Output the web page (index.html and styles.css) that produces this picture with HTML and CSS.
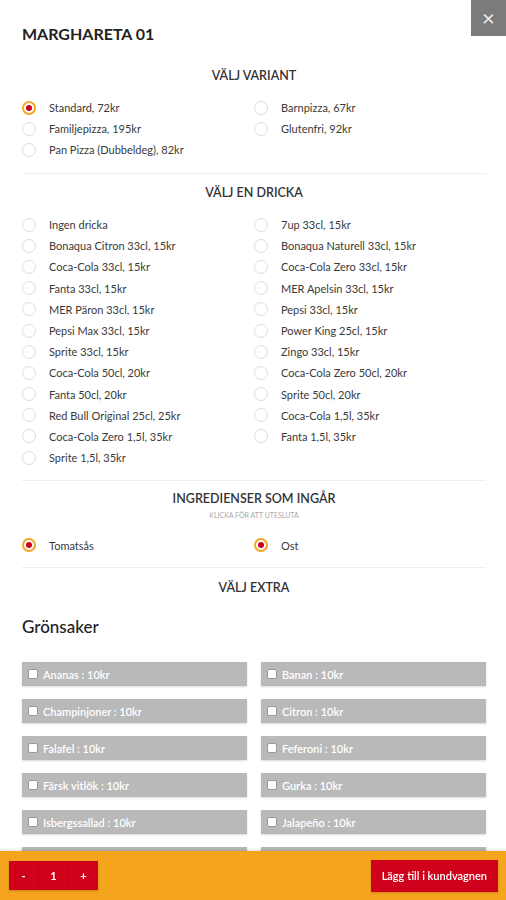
FILE: index.html
```html
<!DOCTYPE html>
<html lang="sv">
<head>
    <meta charset="UTF-8">
    <meta name="viewport" content="width=device-width, initial-scale=1.0">
    <title>Marghareta 01</title>
    <link rel="stylesheet" href="styles.css">
</head>
<body>
    <div class="modal">
        <button class="close-btn">&times;</button>
        <h1 class="product-title">MARGHARETA 01</h1>

        <div class="section variants">
            <h2 class="section-title">VÄLJ VARIANT</h2>
            <div class="options">
                <label class="option"><span class="radio checked"></span>Standard, 72kr</label>
                <label class="option"><span class="radio"></span>Barnpizza, 67kr</label>
                <label class="option"><span class="radio"></span>Familjepizza, 195kr</label>
                <label class="option"><span class="radio"></span>Glutenfri, 92kr</label>
                <label class="option"><span class="radio"></span>Pan Pizza (Dubbeldeg), 82kr</label>
            </div>
        </div>

        <div class="section drinks">
            <h2 class="section-title">VÄLJ EN DRICKA</h2>
            <div class="options">
                <label class="option"><span class="radio"></span>Ingen dricka</label>
                <label class="option"><span class="radio"></span>7up 33cl, 15kr</label>
                <label class="option"><span class="radio"></span>Bonaqua Citron 33cl, 15kr</label>
                <label class="option"><span class="radio"></span>Bonaqua Naturell 33cl, 15kr</label>
                <label class="option"><span class="radio"></span>Coca-Cola 33cl, 15kr</label>
                <label class="option"><span class="radio"></span>Coca-Cola Zero 33cl, 15kr</label>
                <label class="option"><span class="radio"></span>Fanta 33cl, 15kr</label>
                <label class="option"><span class="radio"></span>MER Apelsin 33cl, 15kr</label>
                <label class="option"><span class="radio"></span>MER Päron 33cl, 15kr</label>
                <label class="option"><span class="radio"></span>Pepsi 33cl, 15kr</label>
                <label class="option"><span class="radio"></span>Pepsi Max 33cl, 15kr</label>
                <label class="option"><span class="radio"></span>Power King 25cl, 15kr</label>
                <label class="option"><span class="radio"></span>Sprite 33cl, 15kr</label>
                <label class="option"><span class="radio"></span>Zingo 33cl, 15kr</label>
                <label class="option"><span class="radio"></span>Coca-Cola 50cl, 20kr</label>
                <label class="option"><span class="radio"></span>Coca-Cola Zero 50cl, 20kr</label>
                <label class="option"><span class="radio"></span>Fanta 50cl, 20kr</label>
                <label class="option"><span class="radio"></span>Sprite 50cl, 20kr</label>
                <label class="option"><span class="radio"></span>Red Bull Original 25cl, 25kr</label>
                <label class="option"><span class="radio"></span>Coca-Cola 1,5l, 35kr</label>
                <label class="option"><span class="radio"></span>Coca-Cola Zero 1,5l, 35kr</label>
                <label class="option"><span class="radio"></span>Fanta 1,5l, 35kr</label>
                <label class="option"><span class="radio"></span>Sprite 1,5l, 35kr</label>
            </div>
        </div>

        <div class="section ingredients">
            <h2 class="section-title">INGREDIENSER SOM INGÅR</h2>
            <p class="section-sub">KLICKA FÖR ATT UTESLUTA</p>
            <div class="options">
                <label class="option"><span class="radio checked"></span>Tomatsås</label>
                <label class="option"><span class="radio checked"></span>Ost</label>
            </div>
        </div>

        <div class="section extra-section">
            <h2 class="section-title">VÄLJ EXTRA</h2>
            <h3 class="group-title">Grönsaker</h3>
            <div class="extras">
                <label class="extra"><span class="checkbox"></span>Ananas : 10kr</label>
                <label class="extra"><span class="checkbox"></span>Banan : 10kr</label>
                <label class="extra"><span class="checkbox"></span>Champinjoner : 10kr</label>
                <label class="extra"><span class="checkbox"></span>Citron : 10kr</label>
                <label class="extra"><span class="checkbox"></span>Falafel : 10kr</label>
                <label class="extra"><span class="checkbox"></span>Feferoni : 10kr</label>
                <label class="extra"><span class="checkbox"></span>Färsk vitlök : 10kr</label>
                <label class="extra"><span class="checkbox"></span>Gurka : 10kr</label>
                <label class="extra"><span class="checkbox"></span>Isbergssallad : 10kr</label>
                <label class="extra"><span class="checkbox"></span>Jalapeño : 10kr</label>
                <label class="extra"><span class="checkbox"></span>Lök : 10kr</label>
                <label class="extra"><span class="checkbox"></span>Oliver : 10kr</label>
            </div>
        </div>
    </div>

    <div class="cart-bar">
        <div class="stepper">
            <button class="step">-</button>
            <span class="qty">1</span>
            <button class="step">+</button>
        </div>
        <button class="add-btn">Lägg till i kundvagnen</button>
    </div>
</body>
</html>
```

FILE: styles.css
```css
body {
    margin: 0;
    font-family: Lato, 'Open Sans', sans-serif;
    color: #333;
    background: white;
}
.modal {
    padding: 24px 20px 80px 22px;
}
.close-btn {
    position: absolute;
    top: 0;
    right: 0;
    width: 35px;
    height: 36px;
    border: none;
    background: #7b7b7b;
    color: #eee;
    font-size: 22px;
    line-height: 36px;
    padding: 0;
    font-family: Lato, sans-serif;
}
.product-title {
    margin: 0;
    font-size: 16px;
    line-height: 20px;
    font-weight: 700;
    color: #222;
}
.section {
    border-bottom: 1px solid #eee;
    padding-top: 9px;
    padding-bottom: 13px;
}
.variants {
    padding-top: 23px;
}
.drinks {
    padding-top: 10px;
    padding-bottom: 12px;
}
.ingredients {
    padding-bottom: 11px;
}
.extra-section {
    padding-top: 11px;
    border-bottom: none;
}
.section-title {
    margin: 0 0 12px;
    text-align: center;
    font-size: 12.5px;
    line-height: 18px;
    font-weight: 600;
    color: #333;
}
.section-sub {
    margin: -10px 0 14px;
    text-align: center;
    font-size: 7px;
    line-height: 10px;
    color: #aaa;
}
.options {
    display: grid;
    grid-template-columns: 1fr 1fr;
}
.option {
    display: flex;
    align-items: center;
    height: 21px;
    font-size: 11px;
    color: #3a3a3a;
}
.drinks .option {
    height: 21.2px;
}
.ingredients .option {
    height: 22px;
}
.radio {
    width: 12px;
    height: 12px;
    border: 1px solid #ddd;
    border-radius: 50%;
    margin-right: 13px;
    box-sizing: content-box;
    display: flex;
    align-items: center;
    justify-content: center;
    flex-shrink: 0;
}
.radio.checked {
    width: 10px;
    height: 10px;
    border: 2px solid #f5a623;
}
.radio.checked::after {
    content: '';
    width: 6px;
    height: 6px;
    border-radius: 50%;
    background: #d0021b;
}
.group-title {
    margin: 19px 0 24px;
    font-size: 17px;
    line-height: 22px;
    font-weight: 500;
    color: #222;
}
.extras {
    display: grid;
    grid-template-columns: 1fr 1fr;
    column-gap: 14px;
    row-gap: 13px;
}
.extra {
    display: flex;
    align-items: center;
    height: 24px;
    padding-left: 6px;
    background: #b9b9b9;
    box-shadow: 0 1px 2px rgba(0,0,0,0.15);
    color: white;
    font-size: 11px;
    font-weight: 600;
}
.checkbox {
    width: 8px;
    height: 8px;
    background: white;
    border: 1px solid #999;
    border-radius: 2px;
    margin-right: 5px;
}
.cart-bar {
    position: fixed;
    left: 0;
    right: 0;
    bottom: 0;
    height: 49px;
    background: #f5a51d;
    display: flex;
    align-items: center;
    justify-content: space-between;
    padding: 0 8px 0 9px;
    box-shadow: 0 -1px 3px rgba(0,0,0,0.15);
}
.stepper {
    display: flex;
    height: 29px;
    background: #d0021b;
    box-shadow: 0 1px 2px rgba(0,0,0,0.2);
}
.step, .qty {
    width: 29px;
    display: flex;
    align-items: center;
    justify-content: center;
    color: white;
    font-size: 11px;
    font-weight: 700;
    font-family: Lato, sans-serif;
}
.step {
    border: none;
    background: transparent;
    padding: 0;
}
.qty {
    border-left: 1px solid #c0011a;
    border-right: 1px solid #c0011a;
}
.add-btn {
    height: 32px;
    padding: 0 11px;
    border: none;
    background: #d0021b;
    color: white;
    font-family: Lato, sans-serif;
    font-size: 11px;
    font-weight: 600;
    box-shadow: 0 1px 2px rgba(0,0,0,0.2);
}
```
